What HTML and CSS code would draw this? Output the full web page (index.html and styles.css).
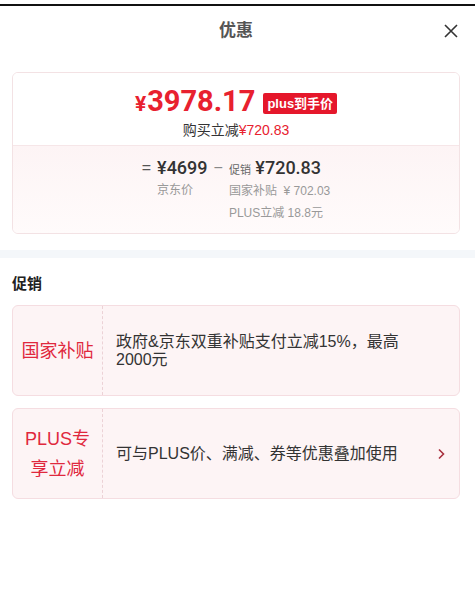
FILE: index.html
```html
<!DOCTYPE html>
<html lang="zh-CN">
<head>
<meta charset="utf-8">
<title>优惠</title>
<link rel="stylesheet" href="styles.css">
</head>
<body>
<div class="topline"></div>
<header class="head">
  <h1 class="title">优惠</h1>
  <button class="close" aria-label="关闭">
    <svg width="14" height="14" viewBox="0 0 14 14"><path d="M1 1L13 13M13 1L1 13" stroke="#333" stroke-width="1.6" fill="none"/></svg>
  </button>
</header>

<section class="price-card">
  <div class="pc-top">
    <div class="final">
      <span class="yen">¥</span><span class="num">3978.17</span><span class="badge">plus到手价</span>
    </div>
    <div class="save">购买立减<span class="red">¥720.83</span></div>
  </div>
  <div class="pc-bottom">
    <span class="op">=</span>
    <div class="col">
      <div class="amt">¥4699</div>
      <div class="lbl">京东价</div>
    </div>
    <span class="op minus">−</span>
    <div class="col">
      <div class="amt"><span class="small">促销</span> ¥720.83</div>
      <div class="lbl">国家补贴&nbsp; ¥ 702.03</div>
      <div class="lbl">PLUS立减 18.8元</div>
    </div>
  </div>
</section>

<div class="band"></div>

<h2 class="sec-title">促销</h2>

<div class="promo">
  <div class="p-label">国家补贴</div>
  <div class="p-text">政府&amp;京东双重补贴支付立减15%，最高2000元</div>
  <div class="p-arrow"></div>
</div>

<div class="promo">
  <div class="p-label tall">PLUS专享立减</div>
  <div class="p-text">可与PLUS价、满减、券等优惠叠加使用</div>
  <div class="p-arrow">
    <svg width="8" height="12" viewBox="0 0 8 12"><path d="M2 1.5L6.5 6L2 10.5" stroke="#a8303e" stroke-width="1.6" fill="none"/></svg>
  </div>
</div>
</body>
</html>
```

FILE: styles.css
```css
* { box-sizing: border-box; }
html, body { margin: 0; padding: 0; background: #fff; }
body {
  width: 475px;
  font-family: "Liberation Sans", "Noto Sans CJK SC", sans-serif;
  color: #333;
}
.topline { margin-top: 4px; height: 2px; background: #111; }

.head {
  position: relative;
  height: 50px;
  margin: 0 15px 0 12px;
  display: flex;
  align-items: center;
  justify-content: center;
}
.title {
  margin: 0;
  font-size: 17px;
  font-weight: bold;
  color: #555;
  line-height: 20px;
}
.close {
  position: absolute;
  right: 2px;
  top: 18px;
  width: 14px;
  height: 14px;
  padding: 0;
  border: 0;
  background: none;
  display: flex;
}

.price-card {
  margin: 16px 15px 0 12px;
  border: 1px solid #f3e2e4;
  border-radius: 6px;
  overflow: hidden;
}
.pc-top {
  background: #fff;
  padding: 11px 0 5px;
  border-bottom: 1px solid #f6e6e8;
  display: flex;
  flex-direction: column;
  align-items: center;
}
.final {
  display: flex;
  align-items: center;
  height: 34px;
  color: #e8212f;
  font-family: "Roboto", "Liberation Sans", sans-serif;
  font-weight: bold;
}
.yen { font-size: 21px; margin-top: 5px; margin-right: 1px; }
.num { font-size: 29px; letter-spacing: 0; }
.badge {
  margin-left: 8px;
  margin-top: 5px;
  background: #e5172b;
  color: #fff;
  font-family: "Liberation Sans", "Noto Sans CJK SC", sans-serif;
  font-size: 13px;
  font-weight: bold;
  line-height: 21px;
  padding: 0 4px;
  border-radius: 2px;
}
.save {
  margin-top: 2px;
  font-size: 14px;
  line-height: 20px;
  color: #333;
}
.red { color: #e8212f; }

.pc-bottom {
  background: linear-gradient(#fdf4f5, #fffbfb);
  padding: 11px 0 9px;
  display: flex;
  justify-content: center;
  align-items: flex-start;
  gap: 6px;
}
.op { font-size: 16px; line-height: 22px; color: #555; }
.minus { color: #888; }
.col { display: flex; flex-direction: column; }
.amt {
  font-family: "Roboto", "Liberation Sans", "Noto Sans CJK SC", sans-serif;
  font-weight: 500;
  font-size: 18px;
  line-height: 22px;
  color: #333;
}
.amt .small {
  font-family: "Noto Sans CJK SC", sans-serif;
  font-size: 11px;
  font-weight: normal;
  color: #666;
}
.lbl {
  font-size: 12px;
  line-height: 22px;
  color: #999;
}

.band { margin-top: 16px; height: 8px; background: #f4f7fa; }

.sec-title {
  margin: 16px 0 0 12px;
  font-size: 15px;
  line-height: 20px;
  font-weight: bold;
  color: #222;
}

.promo {
  margin: 11px 15px 0 12px;
  height: 91px;
  border: 1px solid #f5dde1;
  border-radius: 6px;
  background: #fdf4f5;
  display: flex;
  align-items: stretch;
}
.promo + .promo { margin-top: 12px; }
.p-label {
  flex: 0 0 90px;
  border-right: 1px dashed #ecd2d6;
  padding: 0 8px;
  display: flex;
  align-items: center;
  justify-content: center;
  text-align: center;
  color: #e0283d;
  font-size: 18px;
  line-height: 22px;
}
.p-label.tall { line-height: 30px; }
.p-text {
  flex: 1;
  display: flex;
  align-items: center;
  padding-left: 13px;
  font-size: 16px;
  line-height: 18px;
  color: #333;
}
.p-arrow {
  flex: 0 0 40px;
  display: flex;
  align-items: center;
  justify-content: center;
  padding-left: 4px;
}
```
